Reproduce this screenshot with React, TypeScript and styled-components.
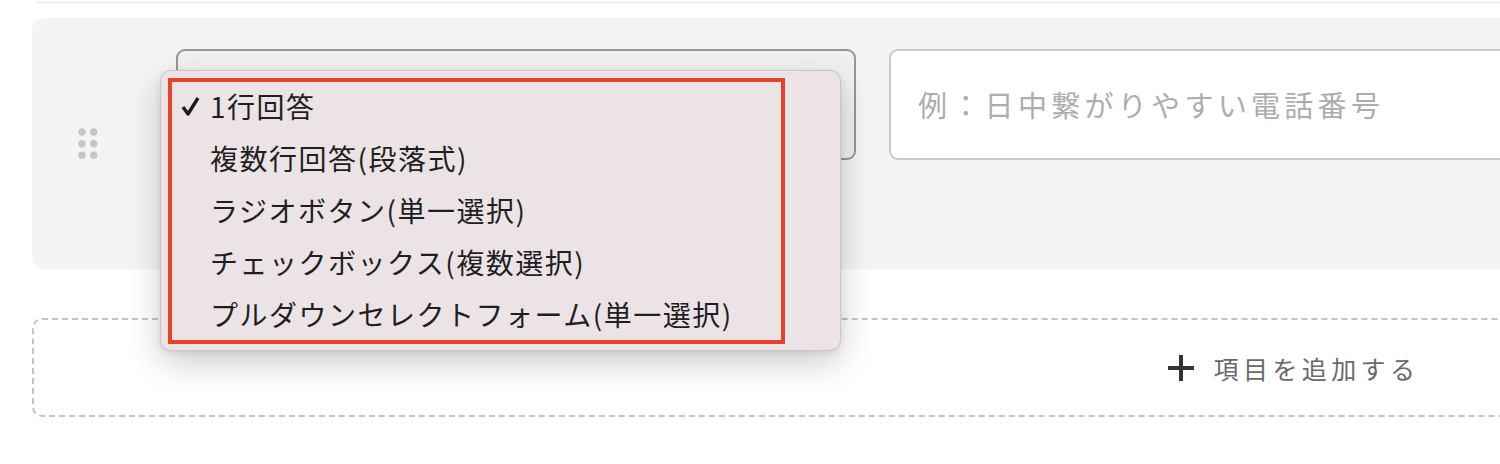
import React from 'react';
import styled, { createGlobalStyle } from 'styled-components';

const GlobalStyle = createGlobalStyle`
  html, body {
    margin: 0;
    padding: 0;
    background: #ffffff;
    overflow: hidden;
  }
  body {
    font-family: "Noto Sans CJK JP", "Noto Sans", sans-serif;
    color: #222;
  }
`;

const Page = styled.div`
  width: 2522px;
  margin-left: 32px;
`;

const PrevCard = styled.div`
  height: 2px;
  margin-left: 4px;
  background: #fff;
  border-radius: 0 0 8px 8px;
  box-shadow: 0 1px 2px rgba(0, 0, 0, 0.12);
`;

const FieldCard = styled.div`
  margin-top: 16px;
  height: 251px;
  background: #f4f4f4;
  border-radius: 12px;
  display: flex;
  align-items: center;
  padding-left: 46px;
  box-sizing: border-box;
`;

const Handle = styled.div`
  width: 20px;
  height: 32px;
  flex-shrink: 0;
  display: flex;
`;

const Fields = styled.div`
  align-self: stretch;
  flex: 1;
  display: flex;
  align-items: flex-start;
  gap: 33px;
  padding-top: 31px;
  margin-left: 78px;
`;

const SelectWrap = styled.div`
  position: relative;
  width: 680px;
  flex-shrink: 0;
`;

const SelectBox = styled.div`
  height: 111px;
  box-sizing: border-box;
  border: 2px solid #969696;
  border-radius: 9px;
  background: #f1f1f1;
`;

const Menu = styled.div`
  position: absolute;
  left: -16px;
  top: 21px;
  width: 681px;
  height: 281px;
  box-sizing: border-box;
  background: #ebe3e6;
  border: 1px solid #cbc5c7;
  border-radius: 11px;
  box-shadow: 0 12px 34px rgba(0, 0, 0, 0.2), 0 2px 6px rgba(0, 0, 0, 0.08);
  padding: 7px 0 0 7px;
  z-index: 5;
`;

const Highlight = styled.ul`
  list-style: none;
  margin: 0;
  padding: 0;
  width: 617px;
  height: 266px;
  box-sizing: border-box;
  border: 4px solid #e5432a;
`;

const Item = styled.li`
  display: flex;
  align-items: center;
  height: 52px;
  padding-left: 8px;
  font-size: 28px;
  letter-spacing: 1.5px;
  color: #1f1f1f;
  white-space: nowrap;
  & > span {
    height: 42px;
    display: flex;
    align-items: center;
    margin-bottom: 4px;
  }
`;

const CheckSlot = styled.span`
  width: 30px;
  flex-shrink: 0;
`;

const TextInput = styled.div`
  flex: 1;
  height: 111px;
  box-sizing: border-box;
  border: 2px solid #c9c9c9;
  border-radius: 9px;
  background: #fff;
  display: flex;
  align-items: center;
  padding-left: 27px;
  padding-bottom: 2px;
`;

const Placeholder = styled.span`
  font-size: 29px;
  letter-spacing: 4.3px;
  color: #adadad;
`;

const AddBox = styled.div`
  margin-top: 49px;
  height: 99px;
  box-sizing: border-box;
  border: 2px dashed #c4c4c4;
  border-radius: 10px;
  display: flex;
  align-items: center;
  justify-content: center;
  gap: 19px;
`;

const AddLabel = styled.span`
  font-size: 25px;
  letter-spacing: 4.4px;
  color: #6a6a6a;
`;

const options = [
  '1行回答',
  '複数行回答(段落式)',
  'ラジオボタン(単一選択)',
  'チェックボックス(複数選択)',
  'プルダウンセレクトフォーム(単一選択)',
];

const DragDots = () => (
  <svg width="20" height="32" viewBox="0 0 20 32">
    {[4, 15.7, 27.3].map(cy =>
      [4, 15.7].map(cx => <circle key={`${cx}-${cy}`} cx={cx} cy={cy} r="3.7" fill="#c6c6c6" />)
    )}
  </svg>
);

const Check = () => (
  <svg width="20" height="20" viewBox="0 0 20 20">
    <path d="M3 11 L8 18 L18 2" fill="none" stroke="#1c1c1c" strokeWidth="3.4" strokeLinejoin="round" />
  </svg>
);

const Plus = () => (
  <svg width="28" height="28" viewBox="0 0 28 28">
    <path d="M14 1 V27 M1 14 H27" stroke="#333" strokeWidth="4" />
  </svg>
);

export default function App() {
  return (
    <>
      <GlobalStyle />
      <Page>
        <PrevCard />
        <FieldCard>
          <Handle>
            <DragDots />
          </Handle>
          <Fields>
            <SelectWrap>
              <SelectBox />
              <Menu>
                <Highlight>
                  {options.map((o, i) => (
                    <Item key={o}>
                      <CheckSlot>{i === 0 && <Check />}</CheckSlot>
                      <span>{o}</span>
                    </Item>
                  ))}
                </Highlight>
              </Menu>
            </SelectWrap>
            <TextInput>
              <Placeholder>例：日中繋がりやすい電話番号</Placeholder>
            </TextInput>
          </Fields>
        </FieldCard>
        <AddBox>
          <Plus />
          <AddLabel>項目を追加する</AddLabel>
        </AddBox>
      </Page>
    </>
  );
}
